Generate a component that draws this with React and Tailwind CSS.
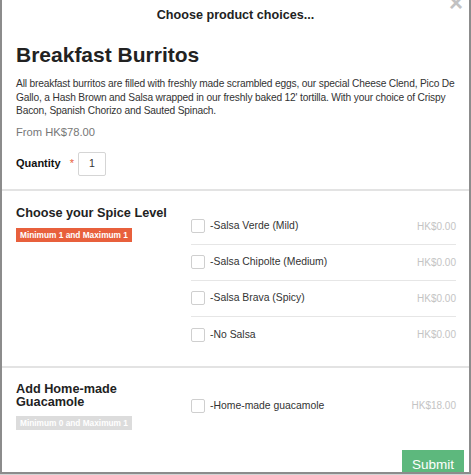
import React from "react";

const spiceOptions = [
  { name: "-Salsa Verde (Mild)", price: "HK$0.00" },
  { name: "-Salsa Chipolte (Medium)", price: "HK$0.00" },
  { name: "-Salsa Brava (Spicy)", price: "HK$0.00" },
  { name: "-No Salsa", price: "HK$0.00" },
];

const OptionRow = ({ name, price, last }) => (
  <div
    className={`flex items-center h-[36px] ${last ? "" : "border-b border-[#e6e6e6]"}`}
  >
    <span className="w-[14px] h-[14px] border border-[#cfcfcf] rounded-[2px] bg-white mr-[5px]"></span>
    <span className="text-[10.4px] text-[#333] flex-1">{name}</span>
    <span className="text-[10px] text-[#c4c4c4]">{price}</span>
  </div>
);

const App = () => {
  return (
    <div
      className="w-[471px] h-[475px] bg-[#d4d4d4] overflow-hidden"
      style={{ fontFamily: '"Liberation Sans", Arial, sans-serif' }}
    >
      <div className="relative w-[471px] h-[474px] bg-white border-x-2 border-b-2 border-[#8c8c8c] overflow-hidden">
        {/* close */}
        <span className="absolute right-[6px] top-[-9px] text-[24px] font-bold text-[#c2c2c2] leading-none">
          ×
        </span>

        {/* header */}
        <div className="h-[30px] flex items-center justify-center pt-[1px]">
          <h3 className="text-[12.6px] font-bold text-[#222]">Choose product choices...</h3>
        </div>

        {/* product info */}
        <div className="px-[14px] pt-[10px]">
          <h1 className="text-[21px] font-bold text-[#222] leading-[29px]">Breakfast Burritos</h1>
          <p className="mt-[8px] text-[10.2px] leading-[13.5px] tracking-[-0.16px] text-[#333] whitespace-nowrap">
            All breakfast burritos are filled with freshly made scrambled eggs, our special Cheese Clend, Pico De
            <br />
            Gallo, a Hash Brown and Salsa wrapped in our freshly baked 12' tortilla. With your choice of Crispy
            <br />
            Bacon, Spanish Chorizo and Sauted Spinach.
          </p>
          <div className="mt-[6px] text-[11.2px] text-[#777] leading-[16px]">From HK$78.00</div>
          <div className="mt-[12px] flex items-center h-[24px]">
            <span className="text-[11px] font-bold text-[#111]">Quantity</span>
            <span className="ml-[9px] text-[11px] text-[#e8603c]">*</span>
            <div className="ml-[4px] w-[28px] h-[24px] border border-[#d5d5d5] rounded-[2px] flex items-center justify-center text-[10.5px] text-[#333]">
              1
            </div>
          </div>
        </div>

        {/* section 1 */}
        <div className="mt-[13px] border-t-2 border-[#e3e3e3] flex pl-[14px] pr-[13px] pt-[18px] pb-[13px]">
          <div className="w-[175px]">
            <div className="text-[12.7px] font-bold text-[#222] leading-[16px] -mt-[4px]">Choose your Spice Level</div>
            <span className="inline-block mt-[2px] bg-[#e8603c] text-white text-[8.3px] font-bold px-[4px] h-[14px] leading-[14px]">
              Minimum 1 and Maximum 1
            </span>
          </div>
          <div className="flex-1">
            {spiceOptions.map((o, i) => (
              <OptionRow key={o.name} name={o.name} price={o.price} last={i === spiceOptions.length - 1} />
            ))}
          </div>
        </div>

        {/* section 2 */}
        <div className="border-t-2 border-[#e3e3e3] flex pl-[14px] pr-[13px] pt-[15px]">
          <div className="w-[175px]">
            <div className="text-[12.7px] font-bold text-[#222] leading-[13px] w-[130px]">Add Home-made Guacamole</div>
            <span className="inline-block mt-[4px] bg-[#dcdcdc] text-white text-[8.3px] font-bold px-[4px] h-[14px] leading-[14px]">
              Minimum 0 and Maximum 1
            </span>
          </div>
          <div className="flex-1 pt-[5px]">
            <OptionRow name="-Home-made guacamole" price="HK$18.00" last />
          </div>
        </div>

        {/* footer */}
        <div className="flex justify-end pr-[5px] mt-[17px]">
          <button className="w-[62px] h-[34px] bg-[#5db87d] text-white text-[13.5px] pb-[3px]">Submit</button>
        </div>
      </div>
    </div>
  );
};

export default App;
